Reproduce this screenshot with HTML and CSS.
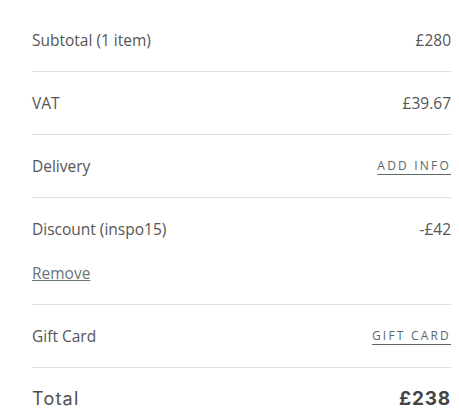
FILE: index.html
```html
<!DOCTYPE html>
<html lang="en">
<head>
  <meta charset="UTF-8">
  <meta name="viewport" content="width=device-width, initial-scale=1.0">
  <title>Order summary</title>
  <link rel="stylesheet" href="styles.css">
</head>
<body>
  <div class="summary">
    <div class="row">
      <span class="label">Subtotal (1 item)</span>
      <span class="value">£280</span>
    </div>
    <div class="row">
      <span class="label">VAT</span>
      <span class="value">£39.67</span>
    </div>
    <div class="row">
      <span class="label">Delivery</span>
      <a class="link-caps" href="#">ADD INFO</a>
    </div>
    <!-- discount row has the extra remove link -->
    <div class="row discount">
      <div class="line">
        <span class="label">Discount (inspo15)</span>
        <span class="value">-£42</span>
      </div>
      <a class="remove" href="#">Remove</a>
    </div>
    <div class="row">
      <span class="label">Gift Card</span>
      <a class="link-caps" href="#">GIFT CARD</a>
    </div>
    <div class="row total">
      <span class="total-label">Total</span>
      <span class="total-value">£238</span>
    </div>
  </div>
</body>
</html>
```

FILE: styles.css
```css
body {
  margin: 0;
  padding: 9px 8px 0 32px;
  background: #fff;
  font-family: "Open Sans", sans-serif;
  color: #555;
}
.summary {
  width: 419px;
}
.row {
  display: flex;
  justify-content: space-between;
  align-items: center;
  padding: 23px 0;
  line-height: 16px;
  border-bottom: 1px solid #e0e0e0;
}
.row.total {
  border-bottom: none;
}
.label,
.value {
  font-size: 15.5px;
}
.link-caps {
  font-size: 12px;
  letter-spacing: 2.2px;
  color: #5a676b;
  text-decoration: underline;
  text-underline-offset: 4px;
}
.discount {
  flex-direction: column;
  align-items: stretch;
}
.discount .line {
  display: flex;
  justify-content: space-between;
}
.remove {
  margin-top: 28px;
  font-size: 15.5px;
  color: #66767b;
  text-decoration: underline;
  align-self: flex-start;
}
.total-label {
  font-family: "Inter", sans-serif;
  font-size: 18px;
  letter-spacing: 1.2px;
  color: #505050;
}
.total-value {
  font-family: "Inter", sans-serif;
  font-weight: 700;
  font-size: 19px;
  letter-spacing: 0.8px;
  color: #444;
}
```
